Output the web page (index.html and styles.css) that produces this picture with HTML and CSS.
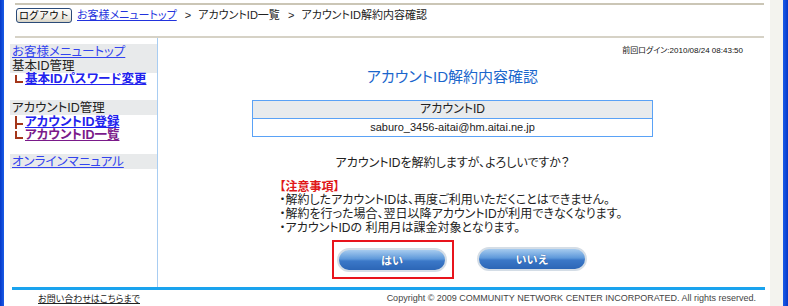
FILE: index.html
```html
<!DOCTYPE html>
<html lang="ja">
<head>
    <meta charset="UTF-8">
    <title>アカウントID解約内容確認</title>
    <link rel="stylesheet" href="styles.css">
</head>
<body>
    <div class="window">
        <div class="edgeLeft"></div>
        <div class="page">
            <div class="topBar">
                <button class="logout" type="button">ログアウト</button>
                <div class="crumbs">
                    <a href="#">お客様メニュートップ</a>
                    <span class="sep">&gt;</span> アカウントID一覧
                    <span class="sep">&gt;</span> アカウントID解約内容確認
                </div>
            </div>

            <div class="content">
                <div class="side">
                    <div class="sideTitle double">
                        <a href="#" class="plain">お客様メニュートップ</a><br>基本ID管理
                    </div>
                    <a href="#" class="sub"><span class="tree end"></span>基本IDパスワード変更</a>

                    <div class="sideTitle gapTop">アカウントID管理</div>
                    <a href="#" class="sub"><span class="tree mid"></span>アカウントID登録</a>
                    <a href="#" class="sub visited"><span class="tree end"></span>アカウントID一覧</a>

                    <div class="sideTitle gapTop2">
                        <a href="#" class="plain">オンラインマニュアル</a>
                    </div>
                </div>

                <div class="main">
                    <div class="lastLogin">前回ログイン:2010/08/24 08:43:50</div>
                    <h1 class="title">アカウントID解約内容確認</h1>

                    <table class="idTable">
                        <tr><th>アカウントID</th></tr>
                        <tr><td>saburo_3456-aitai@hm.aitai.ne.jp</td></tr>
                    </table>

                    <p class="question">アカウントIDを解約しますが、よろしいですか？</p>

                    <div class="notes">
                        <div class="notesHead">【注意事項】</div>
                        <div>・解約したアカウントIDは、再度ご利用いただくことはできません。</div>
                        <div>・解約を行った場合、翌日以降アカウントIDが利用できなくなります。</div>
                        <div>・アカウントIDの 利用月は課金対象となります。</div>
                    </div>

                    <div class="buttons">
                        <div class="focusBox">
                            <button class="pill" type="button">はい</button>
                        </div>
                        <button class="pill" type="button">いいえ</button>
                    </div>
                </div>
            </div>

            <div class="footer">
                <a href="#" class="contact">お問い合わせはこちらまで</a>
                <span class="copy">Copyright © 2009 COMMUNITY NETWORK CENTER INCORPORATED. All rights reserved.</span>
            </div>
        </div>
        <div class="scrollArea"></div>
        <div class="edgeRight"></div>
    </div>
</body>
</html>
```

FILE: styles.css
```css
body {
    margin: 0;
    background: #fff;
    font-family: "Liberation Sans", "Noto Sans CJK JP", sans-serif;
    font-feature-settings: "palt";
    color: #222;
}
.window {
    display: flex;
    height: 306px;
    overflow: hidden;
}
.edgeLeft {
    width: 4px;
    background: linear-gradient(90deg, #0638c8, #1a5ce8);
}
.edgeRight {
    width: 5px;
    background: linear-gradient(90deg, #1a5ce8, #0638c8);
}
.scrollArea {
    width: 13px;
    background: #f3f3ee;
}
.page {
    flex: 1;
    display: flex;
    flex-direction: column;
}

/* top bar */
.topBar {
    margin: 3px 6px 0 11px;
    height: 28px;
    border-top: 2px solid #cbc6b6;
    border-bottom: 2px solid #d6d2c6;
    display: flex;
    align-items: flex-start;
    padding: 3px 0 0 1px;
    box-sizing: content-box;
}
.logout {
    width: 56px;
    height: 15px;
    padding: 0;
    font-family: inherit;
    font-size: 10px;
    line-height: 13px;
    color: #000;
    border: 1px solid #2a4a78;
    border-radius: 3px;
    background: linear-gradient(#ffffff, #ece9e0 70%, #d6d2c4);
}
.crumbs {
    margin-left: 5px;
    font-size: 11px;
    line-height: 15px;
    color: #222;
}
.crumbs a {
    color: #2233dd;
}
.sep {
    margin: 0 4px 0 5px;
}

/* content */
.content {
    display: flex;
    height: 252px;
    margin: 0 5px 0 6px;
}
.side {
    width: 147px;
    border-right: 1px solid #a8cdf2;
    padding-top: 6px;
    font-size: 12.5px;
    line-height: 14px;
}
.sideTitle {
    background: #e8eaeb;
    padding: 1px 0 0 2px;
    color: #222;
}
.sideTitle.double {
    height: 28px;
}
.gapTop {
    margin-top: 14px;
}
.gapTop2 {
    margin-top: 12px;
}
.side a.plain {
    color: #3344ee;
}
.sub {
    display: flex;
    align-items: flex-end;
    padding-left: 5px;
    height: 13.5px;
    font-weight: bold;
    color: #2222ee;
}
.sub.visited {
    color: #7a1a8a;
}
.tree {
    display: inline-block;
    width: 6px;
    margin-right: 2px;
    border-left: 2px solid #a4361a;
    box-sizing: content-box;
}
.tree.end {
    height: 6px;
    margin-bottom: 3px;
    border-bottom: 2px solid #a4361a;
}
.tree.mid {
    height: 13px;
    background: linear-gradient(#a4361a, #a4361a) no-repeat 0 7px / 6px 2px;
}

.main {
    flex: 1;
    padding: 8px 18px 0 0;
    text-align: center;
}
.lastLogin {
    text-align: right;
    padding-right: 4px;
    font-size: 8px;
    line-height: 10px;
    color: #111;
}
.title {
    margin: 11px 0 0;
    font-size: 15px;
    line-height: 20px;
    font-weight: normal;
    color: #1a66cc;
}
.idTable {
    margin: 13px auto 0;
    width: 401px;
    border-collapse: collapse;
    font-size: 12px;
}
.idTable th, .idTable td {
    border: 1px solid #5aa2f6;
    height: 17px;
    padding: 0;
    font-weight: normal;
    line-height: 17px;
}
.idTable th {
    background: #e8ebed;
}
.idTable td {
    font-size: 11px;
}
.question {
    margin: 18px 0 0;
    font-size: 12px;
    line-height: 16px;
}
.notes {
    width: 346px;
    margin: 10px auto 0;
    text-align: left;
    font-size: 12px;
    line-height: 13.7px;
}
.notesHead {
    color: #e01818;
    font-weight: bold;
}
.buttons {
    display: flex;
    justify-content: center;
    align-items: center;
    gap: 23px;
    margin-top: 4px;
    padding-left: 14px;
}
.focusBox {
    border: 2px solid #e8141c;
    padding: 6px 5px 5px 3px;
}
.pill {
    width: 110px;
    height: 24px;
    padding: 0;
    border: 2px solid #d4dde6;
    border-radius: 12px;
    background: linear-gradient(#a6cbef, #5d98da 45%, #3b78c8 55%, #2c66b6);
    color: #fff;
    font-family: inherit;
    font-size: 11px;
    font-weight: bold;
    text-shadow: 0 0 1px #24508e;
}

/* footer */
.footer {
    margin: 0 5px 0 8px;
    border-top: 3px solid #1aa3ee;
    display: flex;
    justify-content: space-between;
    align-items: center;
    height: 16px;
    font-size: 9px;
}
.contact {
    margin-left: 26px;
    color: #222;
}
.copy {
    margin-right: 9px;
    color: #444;
}
```
